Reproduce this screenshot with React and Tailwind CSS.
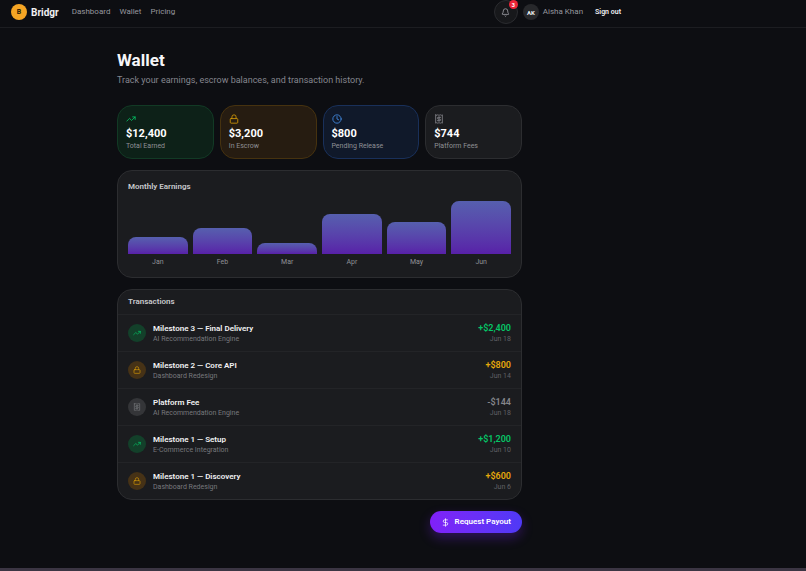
import { Bell, Clock, DollarSign, Lock, Receipt, TrendingUp } from 'lucide-react';

const navLinks = ['Dashboard', 'Wallet', 'Pricing'];

const stats = [
  { label: 'Total Earned', value: '$12,400', icon: TrendingUp, card: 'bg-[#0d2118] border-[#123a25]', color: 'text-[#05c566]' },
  { label: 'In Escrow', value: '$3,200', icon: Lock, card: 'bg-[#261c11] border-[#46320f]', color: 'text-[#d59a07]' },
  { label: 'Pending Release', value: '$800', icon: Clock, card: 'bg-[#10192a] border-[#19305a]', color: 'text-[#438ee8]' },
  { label: 'Platform Fees', value: '$744', icon: Receipt, card: 'bg-[#1b1c1f] border-[#2c2d30]', color: 'text-[#85868b]' },
];

const months = [
  { month: 'Jan', earned: 1750 },
  { month: 'Feb', earned: 2600 },
  { month: 'Mar', earned: 1150 },
  { month: 'Apr', earned: 4000 },
  { month: 'May', earned: 3200 },
  { month: 'Jun', earned: 5300 },
];
const maxEarned = Math.max(...months.map(m => m.earned));

const kinds = {
  release: { icon: TrendingUp, badge: 'bg-[#13402a] text-[#05c566]', amount: 'text-[#05c566]' },
  escrow: { icon: Lock, badge: 'bg-[#463216] text-[#d59a07]', amount: 'text-[#e5a80b]' },
  fee: { icon: Receipt, badge: 'bg-[#343538] text-[#77787c]', amount: 'text-[#85868b]' },
};

const transactions = [
  { title: 'Milestone 3 — Final Delivery', project: 'AI Recommendation Engine', amount: '+$2,400', date: 'Jun 18', kind: 'release' },
  { title: 'Milestone 2 — Core API', project: 'Dashboard Redesign', amount: '+$800', date: 'Jun 14', kind: 'escrow' },
  { title: 'Platform Fee', project: 'AI Recommendation Engine', amount: '-$144', date: 'Jun 18', kind: 'fee' },
  { title: 'Milestone 1 — Setup', project: 'E-Commerce Integration', amount: '+$1,200', date: 'Jun 10', kind: 'release' },
  { title: 'Milestone 1 — Discovery', project: 'Dashboard Redesign', amount: '+$600', date: 'Jun 6', kind: 'escrow' },
];

function Header() {
  return (
    <header className="border-b border-[#1c1d21]">
      <div className="max-w-[640px] h-[27px] pb-[3px] pl-[11px] pr-[19px] flex items-center">
        <a href="#" className="flex items-center gap-1 text-[10px] font-bold text-[#f1f1f3]">
          <span className="size-4 rounded-full bg-[#f5a524] text-[#2b1b05] text-[7px] flex items-center justify-center">B</span>
          Bridgr
        </a>
        <nav className="flex gap-[9px] ml-[13px] text-[8px] text-[#96979e]">
          {navLinks.map(l => <a key={l} href="#">{l}</a>)}
        </nav>
        <div className="ml-auto flex items-center text-[8px]">
          <button aria-label="Notifications" className="relative size-6 shrink-0 rounded-full bg-[#17181b] border border-[#2a2b2f] text-[#a9aab0] flex items-center justify-center">
            <Bell size={9} />
            <span className="absolute -top-px -right-px size-[9px] rounded-full bg-[#ec2538] text-white text-[6px] leading-none font-bold flex items-center justify-center">3</span>
          </button>
          <span className="ml-[5px] size-4 rounded-full bg-[#27282b] text-[#f1f1f3] text-[6px] font-bold flex items-center justify-center">AK</span>
          <span className="ml-1 text-[#96979e]">Aisha Khan</span>
          <button className="ml-3 text-[7px] font-semibold text-[#f1f1f3]">Sign out</button>
        </div>
      </div>
    </header>
  );
}

function StatCard({ label, value, icon: Icon, card, color }) {
  return (
    <div className={`rounded-[15px] border px-2 pt-2 pb-[7px] ${card}`}>
      <Icon size={10} className={color} />
      <p className="mt-1 text-[11px] leading-3 font-bold text-white">{value}</p>
      <p className="mt-px text-[7px] leading-[10px] text-[#8f9095]">{label}</p>
    </div>
  );
}

function EarningsChart() {
  return (
    <section className="mt-[11px] rounded-[15px] border border-[#2c2d30] bg-[#1b1c1f] p-[10px]">
      <h2 className="text-[8px] leading-3 font-semibold text-[#c9cacd]">Monthly Earnings</h2>
      <div className="mt-2 flex gap-[5px]">
        {months.map(m => (
          <div key={m.month} className="flex-1">
            <div className="h-[53px] flex items-end">
              <div className="w-full rounded-t-lg bg-linear-to-t from-[#5820a8] to-[#565fae]" style={{ height: `${(m.earned / maxEarned) * 100}%` }} />
            </div>
            <p className="mt-[3px] text-center text-[7px] leading-[10px] text-[#8f9095]">{m.month}</p>
          </div>
        ))}
      </div>
    </section>
  );
}

function TransactionRow({ title, project, amount, date, kind }) {
  const { icon: Icon, badge, amount: amountColor } = kinds[kind];
  return (
    <li className="h-[37px] px-[10px] border-t border-[#232427] flex items-center gap-[7px]">
      <span className={`size-[18px] rounded-full flex items-center justify-center ${badge}`}>
        <Icon size={8} />
      </span>
      <div className="flex-1">
        <p className="text-[8px] leading-[11px] font-semibold text-[#f1f1f3]">{title}</p>
        <p className="text-[7px] leading-[10px] text-[#77787d]">{project}</p>
      </div>
      <div className="text-right">
        <p className={`text-[9px] leading-[11px] font-semibold ${amountColor}`}>{amount}</p>
        <p className="text-[7px] leading-[10px] text-[#606166]">{date}</p>
      </div>
    </li>
  );
}

export default function App() {
  return (
    <div className="min-h-screen flex flex-col bg-[#0d0e12] font-['Roboto',sans-serif] border-b-3 border-[#3b3543]">
      <Header />
      <div className="max-w-[640px] w-full pr-px">
        <main className="max-w-[405px] mx-auto pt-[22px]">
          <h1 className="text-[17px] leading-5 font-bold text-[#f6f6f8]">Wallet</h1>
          <p className="mt-1 text-[9px] leading-3 text-[#85868f]">Track your earnings, escrow balances, and transaction history.</p>

          <div className="mt-[19px] grid grid-cols-4 gap-[6px]">
            {stats.map(s => <StatCard key={s.label} {...s} />)}
          </div>

          <EarningsChart />

          <section className="mt-[11px] rounded-[15px] border border-[#2c2d30] bg-[#1b1c1f]">
            <h2 className="px-[10px] h-6 flex items-center text-[8px] font-semibold text-[#c9cacd]">Transactions</h2>
            <ul>
              {transactions.map(t => <TransactionRow key={t.title} {...t} />)}
            </ul>
          </section>

          <div className="mt-[11px] flex justify-end">
            <button className="h-[22px] px-[11px] rounded-full bg-linear-to-r from-[#8020f8] to-[#4f39f6] text-white text-[8px] font-semibold flex items-center gap-[5px] shadow-[0_5px_12px_rgba(127,34,254,0.3)]">
              <DollarSign size={9} />
              Request Payout
            </button>
          </div>
        </main>
      </div>
    </div>
  );
}
